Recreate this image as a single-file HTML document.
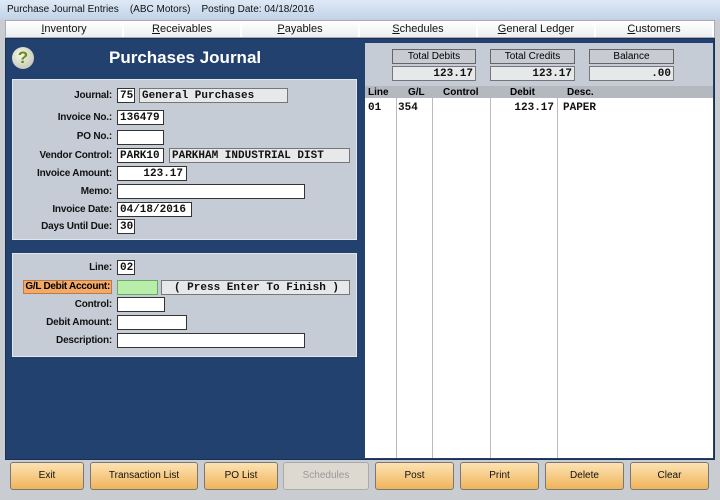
<!DOCTYPE html>
<html><head><style>
*{box-sizing:border-box;margin:0;padding:0}
body{width:720px;height:500px;background:#c9cdd2;font-family:"Liberation Sans",sans-serif;position:relative;overflow:hidden}
.a{position:absolute;white-space:nowrap}
.title{left:0;top:0;width:720px;height:19px;background:linear-gradient(#dfe9f5,#c2d4ea);font-size:10px;line-height:19px;padding-left:7px;color:#111}
.menu{left:5px;top:20px;width:710px;height:18px;background:#fff;border:1px solid #aab}
.tab{top:0;height:16px;font-size:11px;line-height:16px;text-align:center;background:linear-gradient(#fff,#eceef0);border-right:2px solid #fff;color:#111}
.blue{left:5px;top:38px;width:710px;height:422px;background:#22416f;border:1px solid #1a3050}
.panel{background:#c5ccd6;border:1px solid #e2e6ec}
.lbl{font-size:10px;font-weight:bold;text-align:right;width:100px;left:12px;color:#111;letter-spacing:-0.2px}
.f{background:#fff;border:1px solid #333;font-family:"Liberation Mono",monospace;font-size:11px;line-height:14px;padding-left:2px;color:#111;height:15px;font-weight:bold}
.g{background:#e6e8ea;border:1px solid #777}
.btn{top:462px;height:28px;border:1px solid #777;border-radius:3px;background:linear-gradient(#fce3b3,#f0b45a);font-size:10px;text-align:center;line-height:26px;color:#111}
.hd{font-size:10px;font-weight:bold;top:87px}
.vl{top:98px;width:1px;height:360px;background:#bbb}
</style></head><body>
<div class="a title">Purchase Journal Entries &nbsp;&nbsp;&nbsp;(ABC Motors) &nbsp;&nbsp;&nbsp;Posting Date: 04/18/2016</div>
<div class="a menu">
<div class="a tab" style="left:0;width:118px"><u>I</u>nventory</div>
<div class="a tab" style="left:118px;width:118px"><u>R</u>eceivables</div>
<div class="a tab" style="left:236px;width:118px"><u>P</u>ayables</div>
<div class="a tab" style="left:354px;width:118px"><u>S</u>chedules</div>
<div class="a tab" style="left:472px;width:118px"><u>G</u>eneral Ledger</div>
<div class="a tab" style="left:590px;width:118px"><u>C</u>ustomers</div>
</div>
<div class="a blue"></div>
<div class="a" style="left:12px;top:47px;width:22px;height:22px;border-radius:50%;background:radial-gradient(circle at 40% 35%,#f4f6e8,#b8bca8);color:#6a8a1a;font-weight:bold;font-size:17px;text-align:center;line-height:22px">?</div>
<div class="a" style="left:109px;top:48px;color:#fff;font-weight:bold;font-size:17px">Purchases Journal</div>
<div class="a panel" style="left:12px;top:79px;width:345px;height:161px"></div>
<div class="a panel" style="left:12px;top:253px;width:345px;height:104px"></div>

<div class="a lbl" style="top:90px">Journal:</div><div class="a f" style="left:117px;top:88px;width:18px">75</div><div class="a f g" style="left:139px;top:88px;width:149px">General Purchases</div>
<div class="a lbl" style="top:112px">Invoice No.:</div><div class="a f" style="left:117px;top:110px;width:47px">136479</div>
<div class="a lbl" style="top:131px">PO No.:</div><div class="a f" style="left:117px;top:130px;width:47px"></div>
<div class="a lbl" style="top:150px">Vendor Control:</div><div class="a f" style="left:117px;top:148px;width:47px">PARK10</div><div class="a f g" style="left:169px;top:148px;width:181px">PARKHAM INDUSTRIAL DIST</div>
<div class="a lbl" style="top:168px">Invoice Amount:</div><div class="a f" style="left:117px;top:166px;width:70px;text-align:right;padding-right:3px">123.17</div>
<div class="a lbl" style="top:186px">Memo:</div><div class="a f" style="left:117px;top:184px;width:188px"></div>
<div class="a lbl" style="top:204px">Invoice Date:</div><div class="a f" style="left:117px;top:202px;width:75px">04/18/2016</div>
<div class="a lbl" style="top:221px">Days Until Due:</div><div class="a f" style="left:117px;top:219px;width:18px">30</div>

<div class="a lbl" style="top:262px">Line:</div><div class="a f" style="left:117px;top:260px;width:18px">02</div>
<div class="a" style="left:23px;top:280px;width:89px;height:14px;background:#f3a968;border:1px solid #c07a40;font-size:10px;font-weight:bold;line-height:12px;text-align:right;padding-right:1px;letter-spacing:-0.3px;overflow:hidden">G/L Debit Account:</div>
<div class="a f" style="left:117px;top:280px;width:41px;background:#b9eeaa;border-color:#6a6"></div>
<div class="a f g" style="left:161px;top:280px;width:189px;text-align:center">( Press Enter To Finish )</div>
<div class="a lbl" style="top:299px">Control:</div><div class="a f" style="left:117px;top:297px;width:48px"></div>
<div class="a lbl" style="top:317px">Debit Amount:</div><div class="a f" style="left:117px;top:315px;width:70px"></div>
<div class="a lbl" style="top:335px">Description:</div><div class="a f" style="left:117px;top:333px;width:188px"></div>

<div class="a" style="left:365px;top:43px;width:348px;height:43px;background:#c5ccd6"></div>
<div class="a" style="left:392px;top:49px;width:84px;height:15px;background:#c8ccd2;border:1px solid #666;font-size:10px;text-align:center;line-height:13px">Total Debits</div>
<div class="a" style="left:490px;top:49px;width:85px;height:15px;background:#c8ccd2;border:1px solid #666;font-size:10px;text-align:center;line-height:13px">Total Credits</div>
<div class="a" style="left:589px;top:49px;width:85px;height:15px;background:#c8ccd2;border:1px solid #666;font-size:10px;text-align:center;line-height:13px">Balance</div>
<div class="a f g" style="left:392px;top:66px;width:84px;text-align:right;padding-right:2px">123.17</div>
<div class="a f g" style="left:490px;top:66px;width:85px;text-align:right;padding-right:2px">123.17</div>
<div class="a f g" style="left:589px;top:66px;width:85px;text-align:right;padding-right:2px">.00</div>
<div class="a" style="left:365px;top:86px;width:348px;height:12px;background:#b4b9bf"></div>
<div class="a hd" style="left:368px">Line</div><div class="a hd" style="left:408px">G/L</div><div class="a hd" style="left:443px">Control</div><div class="a hd" style="left:510px">Debit</div><div class="a hd" style="left:567px">Desc.</div>
<div class="a" style="left:365px;top:98px;width:348px;height:360px;background:#fff"></div>
<div class="a vl" style="left:396px"></div><div class="a vl" style="left:432px"></div><div class="a vl" style="left:490px"></div><div class="a vl" style="left:557px"></div>
<div class="a f" style="border:none;background:none;left:366px;top:101px">01</div>
<div class="a f" style="border:none;background:none;left:396px;top:101px">354</div>
<div class="a f" style="border:none;background:none;left:490px;top:101px;width:66px;text-align:right;padding-right:2px">123.17</div>
<div class="a f" style="border:none;background:none;left:561px;top:101px">PAPER</div>

<div class="a btn" style="left:10px;width:74px">Exit</div>
<div class="a btn" style="left:90px;width:108px">Transaction List</div>
<div class="a btn" style="left:204px;width:74px">PO List</div>
<div class="a btn" style="left:283px;width:86px;background:#ddd9d1;border-color:#aaa;color:#999">Schedules</div>
<div class="a btn" style="left:375px;width:79px">Post</div>
<div class="a btn" style="left:460px;width:79px">Print</div>
<div class="a btn" style="left:545px;width:79px">Delete</div>
<div class="a btn" style="left:630px;width:79px">Clear</div>
</body></html>
